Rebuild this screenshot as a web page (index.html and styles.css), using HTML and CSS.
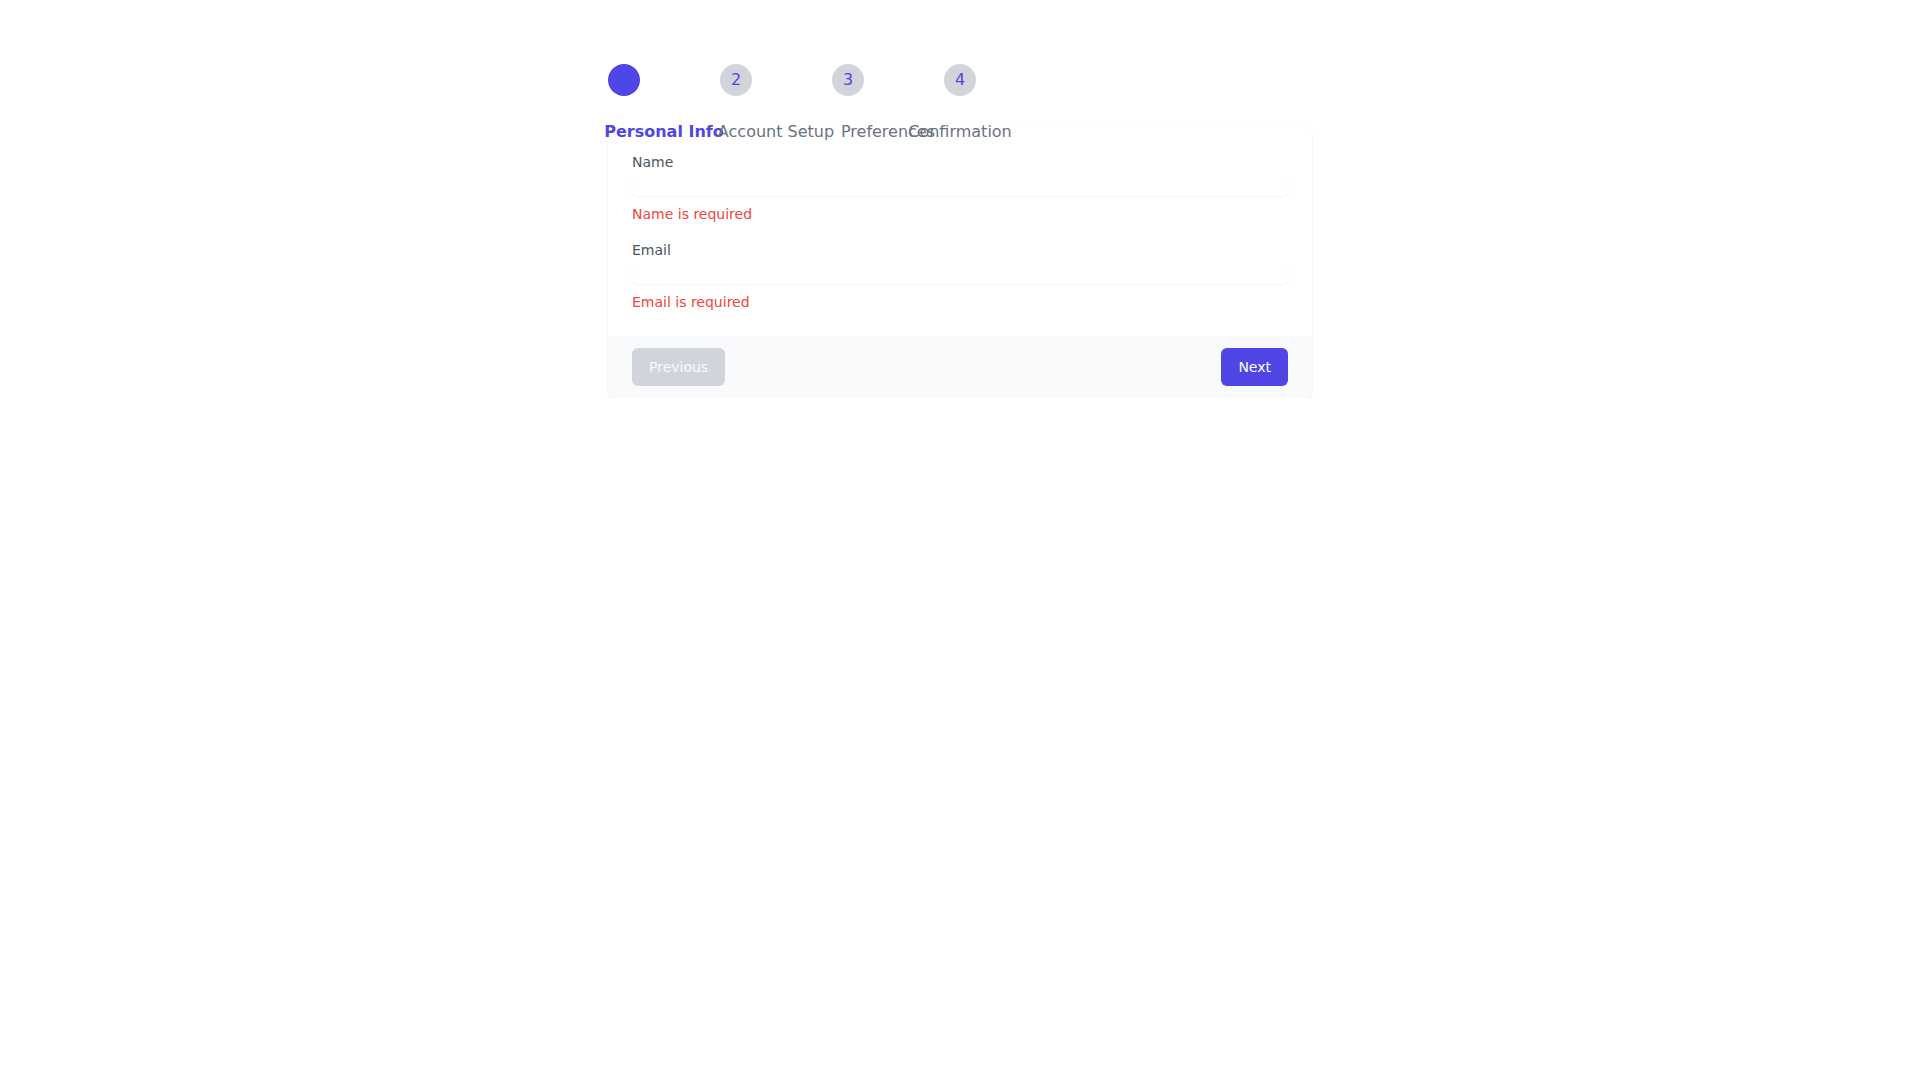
FILE: index.html
```html
<!DOCTYPE html>
<html lang="en">
<head>
<meta charset="utf-8">
<title>Multi-step form</title>
<link rel="stylesheet" href="styles.css">
</head>
<body>
<div class="wrap">
  <div class="stepper">
    <div class="step">
      <div class="circle active"></div>
      <div class="connector"></div>
      <span class="step-label current">Personal Info</span>
    </div>
    <div class="step">
      <div class="circle">2</div>
      <div class="connector"></div>
      <span class="step-label">Account Setup</span>
    </div>
    <div class="step">
      <div class="circle">3</div>
      <div class="connector"></div>
      <span class="step-label">Preferences</span>
    </div>
    <div class="step">
      <div class="circle">4</div>
      <span class="step-label">Confirmation</span>
    </div>
  </div>

  <div class="card">
    <div class="card-body">
      <div class="field">
        <label class="field-label" for="name">Name</label>
        <input class="field-input" id="name" type="text">
        <p class="field-error">Name is required</p>
      </div>
      <div class="field">
        <label class="field-label" for="email">Email</label>
        <input class="field-input" id="email" type="email">
        <p class="field-error">Email is required</p>
      </div>
    </div>
    <div class="card-footer">
      <button class="btn btn-disabled" type="button">Previous</button>
      <button class="btn btn-primary" type="button">Next</button>
    </div>
  </div>
</div>
</body>
</html>
```

FILE: styles.css
```css
* { box-sizing: border-box; }

html, body {
  margin: 0;
  padding: 0;
  background: #ffffff;
}

body {
  font-family: "DejaVu Sans", "Noto Sans", sans-serif;
  font-size: 16px;
  line-height: 1.5;
  color: #111827;
}

.wrap {
  width: 704px;
  margin: 0 auto;
  padding-top: 64px;
}

.stepper {
  display: flex;
  align-items: center;
  margin-bottom: 32px;
}

.step {
  position: relative;
  display: flex;
  align-items: center;
}

.circle {
  width: 32px;
  height: 32px;
  border-radius: 50%;
  background: #d1d5db;
  color: #4f46e5;
  display: flex;
  align-items: center;
  justify-content: center;
  font-size: 16px;
  line-height: 24px;
}

.circle.active {
  background: #4f46e5;
}

.connector {
  width: 80px;
  height: 2px;
}

.step-label {
  position: absolute;
  top: 56px;
  left: 50%;
  transform: translateX(-50%);
  white-space: nowrap;
  font-size: 16px;
  line-height: 24px;
  color: #6b7280;
}

.step-label.current {
  color: #4f46e5;
  font-weight: 700;
}

.card {
  background: #ffffff;
  border-radius: 8px;
  overflow: hidden;
  box-shadow: 0 1px 3px 0 rgba(0, 0, 0, 0.08), 0 1px 2px 0 rgba(0, 0, 0, 0.05);
}

.card-body {
  padding: 24px;
  display: flex;
  flex-direction: column;
  gap: 16px;
}

.field {
  display: flex;
  flex-direction: column;
}

.field-label {
  font-size: 14px;
  line-height: 20px;
  color: #4b5563;
}

.field-input {
  margin-top: 4px;
  width: 100%;
  height: 20px;
  border: 0;
  padding: 0;
  border-radius: 6px;
  background: #ffffff;
  font-family: inherit;
  font-size: 14px;
  line-height: 20px;
  box-shadow: 0 1px 2px 0 rgba(0, 0, 0, 0.05);
  outline: none;
}

.field-error {
  margin: 8px 0 0;
  font-size: 14px;
  line-height: 20px;
  color: #ef4444;
}

.card-footer {
  background: #f9fafb;
  padding: 12px 24px;
  display: flex;
  justify-content: space-between;
  align-items: center;
}

.btn {
  font-family: inherit;
  font-size: 14px;
  line-height: 20px;
  padding: 8px 16px;
  border: 1px solid transparent;
  border-radius: 6px;
  color: #ffffff;
  cursor: pointer;
}

.btn-disabled {
  background: #d1d5db;
  color: #f9fafb;
  cursor: not-allowed;
}

.btn-primary {
  background: #4f46e5;
}
```
